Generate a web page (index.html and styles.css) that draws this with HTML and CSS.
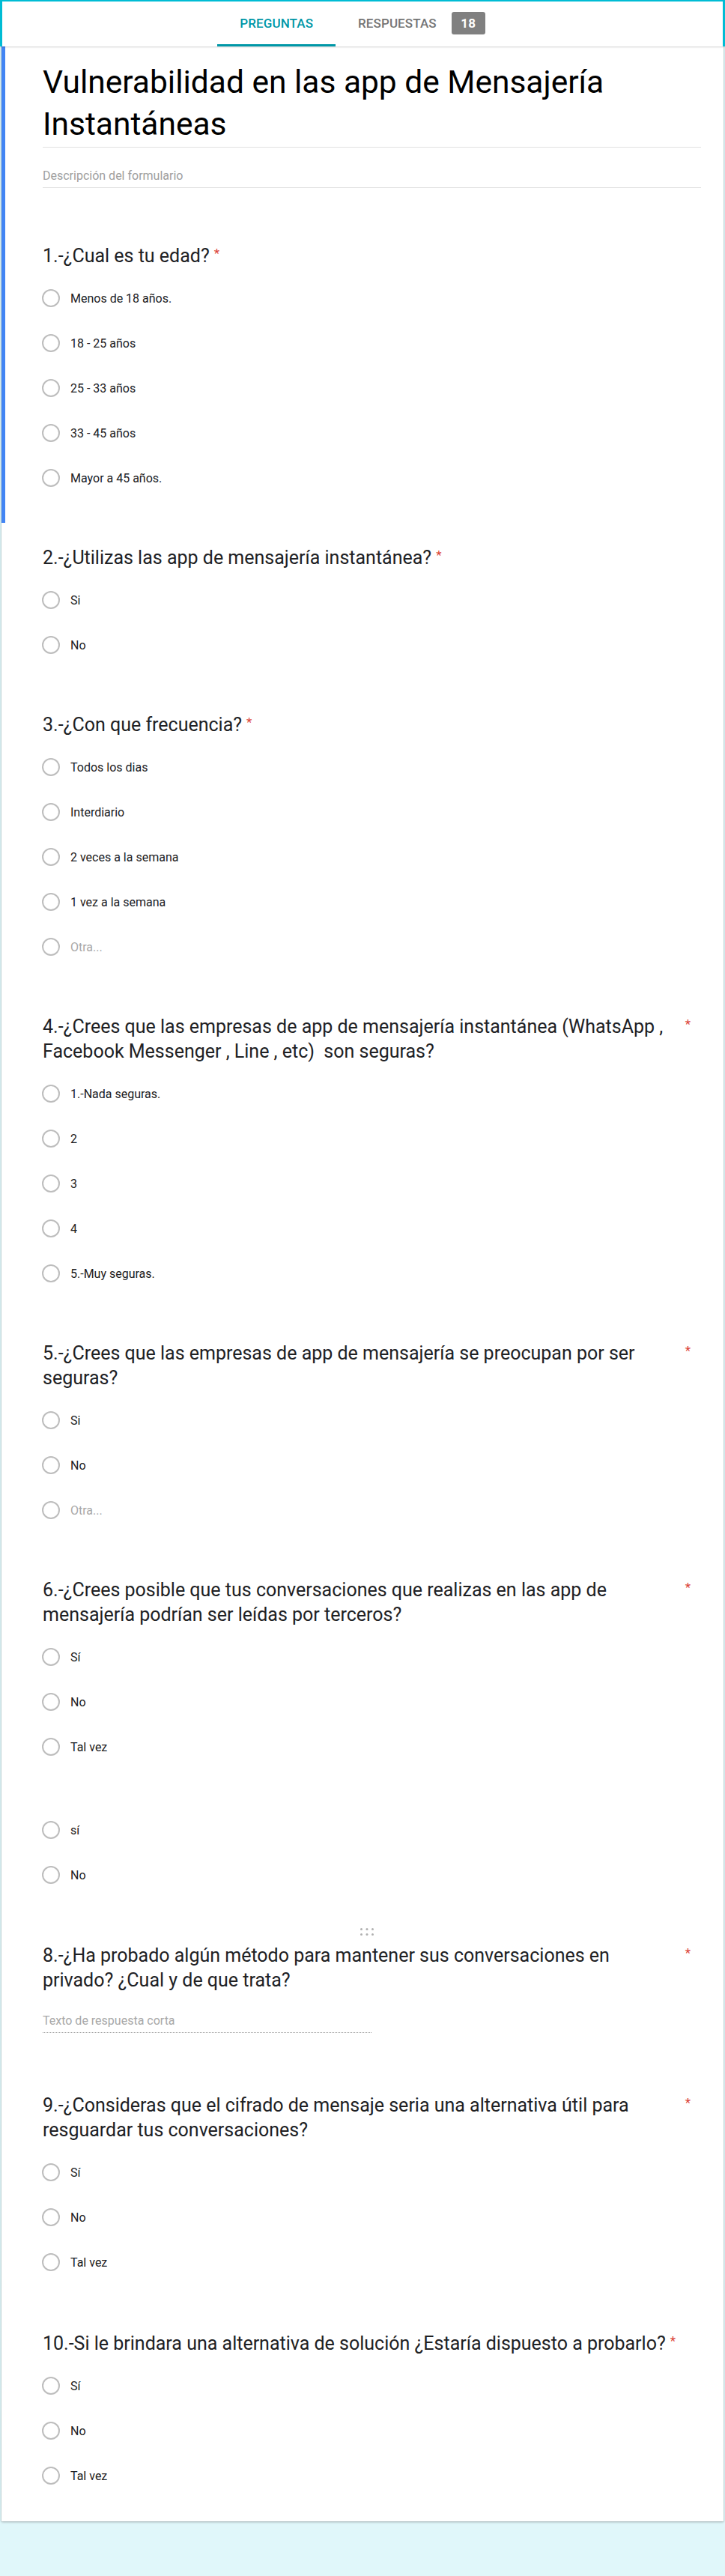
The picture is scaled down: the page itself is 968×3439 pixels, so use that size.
FILE: index.html
```html
<!DOCTYPE html>
<html lang="es">
<head>
<meta charset="utf-8">
<title>Vulnerabilidad en las app de Mensajería Instantáneas</title>
<link rel="stylesheet" href="styles.css">
</head>
<body>
<header class="topbar">
  <nav class="tabs">
    <div class="tab tab-active">PREGUNTAS</div>
    <div class="tab">RESPUESTAS <span class="badge">18</span></div>
  </nav>
</header>

<main class="card">
  <section class="block block-active">
    <div class="form-head">
      <h1 class="form-title">Vulnerabilidad en las app de Mensajería Instantáneas</h1>
      <div class="form-desc">Descripción del formulario</div>
    </div>
    <div class="question q-first">
      <div class="q-title"><span class="q-text">1.-¿Cual es tu edad?</span><span class="req">*</span></div>
      <ul class="options">
        <li class="opt"><span class="radio"></span><span class="opt-label">Menos de 18 años.</span></li>
        <li class="opt"><span class="radio"></span><span class="opt-label">18 - 25 años</span></li>
        <li class="opt"><span class="radio"></span><span class="opt-label">25 - 33 años</span></li>
        <li class="opt"><span class="radio"></span><span class="opt-label">33 - 45 años</span></li>
        <li class="opt"><span class="radio"></span><span class="opt-label">Mayor a 45 años.</span></li>
      </ul>
    </div>
  </section>

  <section class="block">
    <div class="q-title"><span class="q-text">2.-¿Utilizas las app de mensajería instantánea?</span><span class="req">*</span></div>
    <ul class="options">
      <li class="opt"><span class="radio"></span><span class="opt-label">Si</span></li>
      <li class="opt"><span class="radio"></span><span class="opt-label">No</span></li>
    </ul>
  </section>

  <section class="block">
    <div class="q-title"><span class="q-text">3.-¿Con que frecuencia?</span><span class="req">*</span></div>
    <ul class="options">
      <li class="opt"><span class="radio"></span><span class="opt-label">Todos los dias</span></li>
      <li class="opt"><span class="radio"></span><span class="opt-label">Interdiario</span></li>
      <li class="opt"><span class="radio"></span><span class="opt-label">2 veces a la semana</span></li>
      <li class="opt"><span class="radio"></span><span class="opt-label">1 vez a la semana</span></li>
      <li class="opt"><span class="radio"></span><span class="opt-label opt-other">Otra...</span></li>
    </ul>
  </section>

  <section class="block">
    <div class="q-title"><span class="q-text">4.-¿Crees que las empresas de app de mensajería instantánea (WhatsApp , Facebook Messenger , Line , etc)&nbsp; son seguras?</span><span class="req">*</span></div>
    <ul class="options">
      <li class="opt"><span class="radio"></span><span class="opt-label">1.-Nada seguras.</span></li>
      <li class="opt"><span class="radio"></span><span class="opt-label">2</span></li>
      <li class="opt"><span class="radio"></span><span class="opt-label">3</span></li>
      <li class="opt"><span class="radio"></span><span class="opt-label">4</span></li>
      <li class="opt"><span class="radio"></span><span class="opt-label">5.-Muy seguras.</span></li>
    </ul>
  </section>

  <section class="block">
    <div class="q-title"><span class="q-text">5.-¿Crees que las empresas de app de mensajería se preocupan por ser seguras?</span><span class="req">*</span></div>
    <ul class="options">
      <li class="opt"><span class="radio"></span><span class="opt-label">Si</span></li>
      <li class="opt"><span class="radio"></span><span class="opt-label">No</span></li>
      <li class="opt"><span class="radio"></span><span class="opt-label opt-other">Otra...</span></li>
    </ul>
  </section>

  <section class="block">
    <div class="q-title"><span class="q-text">6.-¿Crees posible que tus conversaciones que realizas en las app de mensajería podrían ser leídas por terceros?</span><span class="req">*</span></div>
    <ul class="options">
      <li class="opt"><span class="radio"></span><span class="opt-label">Sí</span></li>
      <li class="opt"><span class="radio"></span><span class="opt-label">No</span></li>
      <li class="opt"><span class="radio"></span><span class="opt-label">Tal vez</span></li>
    </ul>
  </section>

  <section class="block block-untitled">
    <ul class="options">
      <li class="opt"><span class="radio"></span><span class="opt-label">sí</span></li>
      <li class="opt"><span class="radio"></span><span class="opt-label">No</span></li>
    </ul>
  </section>

  <section class="block block-handle">
    <div class="drag-handle">
      <svg width="18" height="10" viewBox="0 0 18 10" aria-hidden="true">
        <circle cx="1.5" cy="1.5" r="1.5"/><circle cx="9" cy="1.5" r="1.5"/><circle cx="16.5" cy="1.5" r="1.5"/>
        <circle cx="1.5" cy="8.5" r="1.5"/><circle cx="9" cy="8.5" r="1.5"/><circle cx="16.5" cy="8.5" r="1.5"/>
      </svg>
    </div>
    <div class="q-title"><span class="q-text">8.-¿Ha probado algún método para mantener sus conversaciones en privado? ¿Cual y de que trata?</span><span class="req">*</span></div>
    <div class="short-answer">Texto de respuesta corta</div>
  </section>

  <section class="block">
    <div class="q-title"><span class="q-text">9.-¿Consideras que el cifrado de mensaje seria una alternativa útil para resguardar tus conversaciones?</span><span class="req">*</span></div>
    <ul class="options">
      <li class="opt"><span class="radio"></span><span class="opt-label">Sí</span></li>
      <li class="opt"><span class="radio"></span><span class="opt-label">No</span></li>
      <li class="opt"><span class="radio"></span><span class="opt-label">Tal vez</span></li>
    </ul>
  </section>

  <section class="block block-last">
    <div class="q-title"><span class="q-text">10.-Si le brindara una alternativa de solución ¿Estaría dispuesto a probarlo?</span><span class="req">*</span></div>
    <ul class="options">
      <li class="opt"><span class="radio"></span><span class="opt-label">Sí</span></li>
      <li class="opt"><span class="radio"></span><span class="opt-label">No</span></li>
      <li class="opt"><span class="radio"></span><span class="opt-label">Tal vez</span></li>
    </ul>
  </section>
</main>
</body>
</html>
```

FILE: styles.css
```css
* {
  box-sizing: border-box;
}

html, body {
  margin: 0;
  padding: 0;
}

body {
  background: #e0f7fa;
  font-family: Roboto, "Noto Sans", Arial, sans-serif;
  color: #202124;
  min-height: 3439px;
}

/* ---------- top bar with tabs ---------- */
.topbar {
  height: 62px;
  background: #ffffff;
  border: 2px solid #00bcd4;
  border-bottom: none;
  border-left-width: 3px;
  border-right-width: 3px;
  box-shadow: 0 1px 2px rgba(0, 0, 0, 0.18);
  position: relative;
  z-index: 2;
}

.tabs {
  display: flex;
  justify-content: center;
  height: 100%;
}

.tab {
  display: flex;
  align-items: center;
  gap: 20px;
  padding: 0 30px;
  font-size: 17px;
  font-weight: 500;
  color: #757575;
  letter-spacing: 0.1px;
  border-bottom: 3px solid transparent;
}

.tab-active {
  color: #0097a7;
  border-bottom-color: #0097a7;
}

.badge {
  display: inline-flex;
  align-items: center;
  justify-content: center;
  width: 45px;
  height: 30px;
  border-radius: 3px;
  background: #808080;
  color: #ffffff;
  font-weight: 700;
  font-size: 17px;
}

/* ---------- form card ---------- */
.card {
  margin: 0 2px;
  background: #ffffff;
  box-shadow: 0 1px 3px rgba(0, 0, 0, 0.28), 0 0 0 1px rgba(0, 0, 0, 0.04);
}

.block {
  padding: 30px 44px 30px 55px;
}

.block-active {
  border-left: 5px solid #4285f4;
  padding: 20px 44px 30px 50px;
}

.block-untitled {
  padding-top: 11px;
}

.block-handle {
  padding-top: 11px;
}

.block-last {
  padding-top: 32px;
  padding-bottom: 31px;
}

.form-head {
  margin-right: -14px;
}

.form-title {
  margin: 0;
  font-size: 42.5px;
  font-weight: 400;
  line-height: 56px;
  color: #000000;
  padding-bottom: 2px;
  border-bottom: 1px solid #e0e0e0;
}

.form-desc {
  margin-top: 28px;
  font-size: 16px;
  line-height: 20px;
  color: #9e9e9e;
  padding-bottom: 5px;
  border-bottom: 1px solid #e0e0e0;
}

.q-first {
  margin-top: 74px;
}

.q-title {
  display: flex;
  align-items: flex-start;
  font-size: 25px;
  line-height: 33px;
  color: #202124;
}

.q-text {
  flex: 0 1 auto;
}

.req {
  flex: none;
  padding-left: 6px;
  font-size: 17px;
  line-height: 17px;
  margin-top: 5px;
  color: #db4437;
}

.options {
  list-style: none;
  margin: 10px 0 0;
  padding: 0;
}

.opt {
  display: flex;
  align-items: center;
  height: 60px;
}

.radio {
  flex: none;
  width: 24px;
  height: 24px;
  margin-left: -1px;
  border: 2px solid #bdbdbd;
  border-radius: 50%;
}

.opt-label {
  margin-left: 14px;
  font-size: 16px;
  color: #202124;
}

.opt-other {
  color: #a8a8a8;
}

.drag-handle {
  display: flex;
  justify-content: center;
  height: 10px;
  margin-bottom: 10px;
  fill: #b0b0b0;
}

.short-answer {
  width: 439px;
  margin-top: 28px;
  margin-bottom: 20px;
  font-size: 16px;
  line-height: 20px;
  color: #a8a8a8;
  padding-bottom: 5px;
  border-bottom: 1px dotted #9e9e9e;
}
```
